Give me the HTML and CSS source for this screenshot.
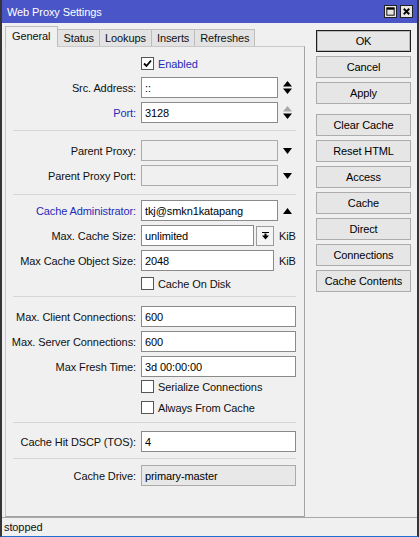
FILE: index.html
```html
<!DOCTYPE html>
<html lang="en">
<head>
  <meta charset="UTF-8">
  <title>Web Proxy Settings</title>
  <link rel="stylesheet" href="styles.css">
</head>
<body>
  <div class="window">
    <div class="titlebar">
      <span class="title">Web Proxy Settings</span>
      <div class="title-btns">
        <span class="tbtn">
          <svg viewBox="0 0 12 12" width="12" height="12"><rect x="2" y="2" width="8" height="8" fill="none" stroke="#000" stroke-width="1"/><line x1="2" y1="3" x2="10" y2="3" stroke="#000" stroke-width="2"/></svg>
        </span>
        <span class="tbtn">
          <svg viewBox="0 0 12 12" width="12" height="12"><path d="M3 3l6 6M9 3l-6 6" stroke="#000" stroke-width="2"/></svg>
        </span>
      </div>
    </div>

    <div class="content">
      <div class="main">
        <div class="tabs">
          <span class="tab active">General</span>
          <span class="tab">Status</span>
          <span class="tab">Lookups</span>
          <span class="tab">Inserts</span>
          <span class="tab">Refreshes</span>
        </div>

        <div class="panel">
          <div class="check-row first">
            <span></span>
            <label class="check">
              <span class="box">
                <svg viewBox="0 0 11 11" width="11" height="11"><path d="M2 5.5l2.5 2.5 4.5-5.5" fill="none" stroke="#000" stroke-width="1.8"/></svg>
              </span>
              <span class="blue">Enabled</span>
            </label>
          </div>

          <div class="row mt7">
            <span class="label">Src. Address:</span>
            <div class="field-wrap">
              <input class="field" value="::">
              <span class="icon">
                <svg viewBox="0 0 9 13" width="9" height="13"><path d="M0 5.5L4.5 0 9 5.5z M0 7.5h9L4.5 13z" fill="#000"/></svg>
              </span>
            </div>
          </div>
          <div class="row">
            <span class="label blue">Port:</span>
            <div class="field-wrap">
              <input class="field" value="3128">
              <span class="icon">
                <svg viewBox="0 0 9 13" width="9" height="13"><path d="M0 5.5L4.5 0 9 5.5z" fill="#a8a8a8"/><path d="M0 7.5h9L4.5 13z" fill="#000"/></svg>
              </span>
            </div>
          </div>

          <div class="sep mt7"></div>

          <div class="row mt9">
            <span class="label">Parent Proxy:</span>
            <div class="field-wrap">
              <input class="field disabled" value="">
              <span class="icon">
                <svg viewBox="0 0 9 6" width="9" height="6"><path d="M0 0h9L4.5 6z" fill="#000"/></svg>
              </span>
            </div>
          </div>
          <div class="row">
            <span class="label">Parent Proxy Port:</span>
            <div class="field-wrap">
              <input class="field disabled" value="">
              <span class="icon">
                <svg viewBox="0 0 9 6" width="9" height="6"><path d="M0 0h9L4.5 6z" fill="#000"/></svg>
              </span>
            </div>
          </div>

          <div class="sep mt8"></div>

          <div class="row mt5">
            <span class="label blue">Cache Administrator:</span>
            <div class="field-wrap">
              <input class="field" value="tkj@smkn1katapang">
              <span class="icon">
                <svg viewBox="0 0 9 6" width="9" height="6"><path d="M0 6L4.5 0 9 6z" fill="#000"/></svg>
              </span>
            </div>
          </div>
          <div class="row">
            <span class="label">Max. Cache Size:</span>
            <div class="field-wrap">
              <input class="field size" value="unlimited">
              <span class="mini-btn">
                <svg viewBox="0 0 7 8" width="7" height="8"><path d="M0 0.5h7" stroke="#000" stroke-width="1"/><path d="M2.5 1.5h2v2h2.5L3.5 7.5 0 3.5h2.5z" fill="#000"/></svg>
              </span>
              <span class="unit">KiB</span>
            </div>
          </div>
          <div class="row">
            <span class="label">Max Cache Object Size:</span>
            <div class="field-wrap">
              <input class="field obj" value="2048">
              <span class="unit">KiB</span>
            </div>
          </div>
          <div class="check-row mt6">
            <span></span>
            <label class="check"><span class="box"></span><span>Cache On Disk</span></label>
          </div>

          <div class="sep mt6"></div>

          <div class="row mt9">
            <span class="label">Max. Client Connections:</span>
            <input class="field full" value="600">
          </div>
          <div class="row">
            <span class="label">Max. Server Connections:</span>
            <input class="field full" value="600">
          </div>
          <div class="row">
            <span class="label">Max Fresh Time:</span>
            <input class="field full" value="3d 00:00:00">
          </div>
          <div class="check-row mt3">
            <span></span>
            <label class="check"><span class="box"></span><span>Serialize Connections</span></label>
          </div>
          <div class="check-row mt8">
            <span></span>
            <label class="check"><span class="box"></span><span>Always From Cache</span></label>
          </div>

          <div class="sep mt8"></div>

          <div class="row mt8">
            <span class="label">Cache Hit DSCP (TOS):</span>
            <input class="field full" value="4">
          </div>

          <div class="sep mt6"></div>

          <div class="row mt6">
            <span class="label">Cache Drive:</span>
            <input class="field full readonly" value="primary-master">
          </div>
        </div>
      </div>

      <div class="side">
        <button class="btn default">OK</button>
        <button class="btn">Cancel</button>
        <button class="btn group-end">Apply</button>
        <button class="btn">Clear Cache</button>
        <button class="btn">Reset HTML</button>
        <button class="btn">Access</button>
        <button class="btn">Cache</button>
        <button class="btn">Direct</button>
        <button class="btn">Connections</button>
        <button class="btn">Cache Contents</button>
      </div>
    </div>

    <div class="statusbar">stopped</div>
  </div>
</body>
</html>
```

FILE: styles.css
```css
:root {
  --panel-bg: #f0f0f0;
  --title-bg: #4a55c8;
  --frame: #353535;
  --blue-text: #1f2cb8;
  --field-border: #8a8a8a;
  --btn-border: #acacac;
  --sep: #d6d6d6;
}

* {
  box-sizing: border-box;
}

body {
  margin: 0;
  font-family: "Liberation Sans", Arial, sans-serif;
  font-size: 11px;
  letter-spacing: -0.1px;
  color: #111;
}

.window {
  width: 419px;
  height: 537px;
  display: flex;
  flex-direction: column;
  background: var(--panel-bg);
  border-left: 2px solid var(--frame);
  border-right: 2px solid var(--frame);
  border-bottom: 1px solid #1f6fd0;
}

/* title bar */
.titlebar {
  height: 23px;
  flex: none;
  display: flex;
  align-items: center;
  justify-content: space-between;
  background: var(--title-bg);
  padding: 0 4px 0 5px;
}

.title {
  color: #fff;
  font-size: 11px;
}

.title-btns {
  display: flex;
  gap: 3px;
}

.tbtn {
  width: 13px;
  height: 13px;
  background: #e6e6e6;
  border: 1px solid #222;
  display: flex;
  align-items: center;
  justify-content: center;
}

.tbtn svg {
  width: 11px;
  height: 11px;
}

/* body */
.content {
  flex: 1;
  display: flex;
  gap: 11px;
  padding: 3px 6px 0 3px;
}

.main {
  width: 300px;
  display: flex;
  flex-direction: column;
}

.tabs {
  display: flex;
  align-items: flex-end;
  height: 20px;
}

.tab {
  height: 17px;
  padding: 0 5px;
  line-height: 16px;
  background: #e3e3e3;
  border: 1px solid #bdbdbd;
  border-bottom: none;
  margin-left: -1px;
}

.tab:first-child {
  margin-left: 0;
}

.tab.active {
  height: 21px;
  line-height: 19px;
  background: var(--panel-bg);
  padding: 0 7px 0 6px;
  margin-bottom: -1px;
  position: relative;
  z-index: 1;
}

.panel {
  flex: 1;
  border: 1px solid #c9c9c9;
  border-right-color: #a3a3a3;
  border-bottom-color: #a3a3a3;
  padding: 0 8px 0 0;
}

.row {
  display: grid;
  grid-template-columns: 130px 155px;
  column-gap: 5px;
  align-items: center;
  height: 21px;
  margin-top: 4px;
}

.check-row {
  display: grid;
  grid-template-columns: 130px 155px;
  column-gap: 5px;
  align-items: center;
  height: 13px;
}

.check-row.first {
  margin-top: 10px;
}

.mt3 { margin-top: 3px; }
.mt5 { margin-top: 5px; }
.mt6 { margin-top: 6px; }
.mt7 { margin-top: 7px; }
.mt8 { margin-top: 8px; }
.mt9 { margin-top: 9px; }

.label {
  text-align: right;
  white-space: nowrap;
}

.blue {
  color: var(--blue-text);
}

.field-wrap {
  display: flex;
  align-items: center;
  height: 21px;
}

.field {
  height: 21px;
  width: 137px;
  margin: 0;
  padding: 0 3px;
  font: inherit;
  letter-spacing: inherit;
  color: #000;
  background: #fff;
  border: 1px solid var(--field-border);
  outline: none;
}

.field.full {
  width: 155px;
}

.field.size {
  width: 113px;
}

.field.obj {
  width: 133px;
}

.field.disabled {
  background: var(--panel-bg);
  border-color: #ababab;
}

.field.readonly {
  background: #e8e8e8;
  border-color: #ababab;
}

.icon {
  width: 18px;
  display: flex;
  align-items: center;
  justify-content: center;
}

.mini-btn {
  width: 18px;
  height: 20px;
  margin-left: 2px;
  background: #f4f4f4;
  border: 1px solid #9a9a9a;
  display: flex;
  align-items: center;
  justify-content: center;
}

.unit {
  margin-left: 5px;
}

.check {
  grid-column: 2;
  display: flex;
  align-items: center;
  gap: 4px;
}

.box {
  width: 13px;
  height: 13px;
  background: #fff;
  border: 1px solid #555;
  display: flex;
  align-items: center;
  justify-content: center;
}

.sep {
  height: 1px;
  margin-left: 7px;
  background: var(--sep);
}

/* right buttons */
.side {
  width: 95px;
  display: flex;
  flex-direction: column;
  gap: 4px;
  padding-top: 4px;
}

.btn {
  height: 22px;
  margin: 0;
  padding: 0;
  font: inherit;
  letter-spacing: inherit;
  color: #000;
  background: #e6e6e6;
  border: 1px solid var(--btn-border);
}

.btn.default {
  border: 1px solid #1e1e1e;
  box-shadow: inset 0 0 0 1px #b9b9b9;
}

.btn.group-end {
  margin-bottom: 6px;
}

.statusbar {
  height: 19px;
  flex: none;
  border-top: 1px solid #a8a8a8;
  padding: 3px 0 0 2px;
}
```
